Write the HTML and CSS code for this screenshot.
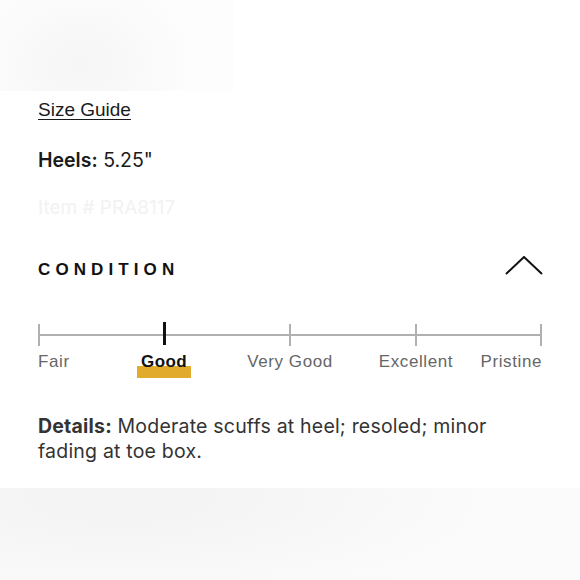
FILE: index.html
```html
<!DOCTYPE html>
<html>
<head>
<meta charset="utf-8">
<link rel="stylesheet" href="styles.css">
</head>
<body>
<div class="top-shade"></div>
<main class="content">
  <a class="size-guide">Size Guide</a>
  <p class="heels"><b>Heels:</b> 5.25"</p>
  <p class="item">Item # PRA8117</p>
  <div class="cond-head">
    <h2 class="cond-title">CONDITION</h2>
    <svg class="chev" width="38" height="20" viewBox="0 0 38 20"><path d="M1 18 L19 1 L37 18" fill="none" stroke="#111" stroke-width="2"/></svg>
  </div>
  <div class="scale">
    <div class="track">
      <span class="tick t0"></span>
      <span class="tick t1 active"></span>
      <span class="tick t2"></span>
      <span class="tick t3"></span>
      <span class="tick t4"></span>
    </div>
    <div class="labels">
      <span class="lbl l0">Fair</span>
      <span class="lbl l1 cur">Good<i class="hl"></i></span>
      <span class="lbl l2">Very Good</span>
      <span class="lbl l3">Excellent</span>
      <span class="lbl l4">Pristine</span>
    </div>
  </div>
  <p class="details"><b>Details:</b> Moderate scuffs at heel; resoled; minor fading at toe box.</p>
</main>
<div class="bottom-shade"></div>
</body>
</html>
```
FILE: styles.css
```css
html, body { margin: 0; padding: 0; background: #fff; }
body { width: 580px; height: 580px; overflow: hidden; font-family: "Liberation Sans", Arial, sans-serif; color: #1a1a1a; }
.top-shade {
  width: 233px; height: 91px;
  background: radial-gradient(ellipse 110px 90px at 80px 65px, #f6f6f6 0%, #f8f8f8 40%, #fbfbfb 80%, #fdfdfd 100%);
}
.content { padding: 0 38px; display: flex; flex-direction: column; }
.size-guide { font-size: 19px; margin-top: 8px; line-height: 22px; text-decoration: underline; text-underline-offset: 3px; text-decoration-thickness: 1px; color: #1a1a1a; align-self: flex-start; }
.heels { font-family: Inter, "Liberation Sans", sans-serif; font-size: 19.5px; margin: 28px 0 0; line-height: 22px; }
.heels b { font-weight: 600; }
.item { font-family: Inter, "Liberation Sans", sans-serif; font-size: 19px; margin: 26px 0 0; line-height: 22px; color: #f2f2f2; }
.cond-head { display: flex; justify-content: space-between; align-items: center; margin-top: 40px; height: 22px; }
.cond-title { margin: 0; font-size: 17px; font-weight: bold; letter-spacing: 5.1px; color: #111; }
.chev { margin-right: -1px; margin-top: -8px; }
.scale { margin-top: 43px; position: relative; }
.track { position: relative; height: 22px; }
.track::before { content: ""; position: absolute; left: 0; right: 0; top: 10px; height: 2px; background: #b0b0b0; }
.tick { position: absolute; top: 0; width: 2px; height: 22px; background: #b0b0b0; margin-left: -1px; }
.tick.active { background: #111; width: 3px; margin-left: -1.5px; top: -2px; height: 23px; }
.t0 { left: 1px; } .t1 { left: 126px; } .t2 { left: 252px; } .t3 { left: 378px; } .t4 { left: 503px; }
.labels { position: relative; height: 30px; margin-top: 6px; }
.lbl { position: absolute; top: 0; font-size: 17px; letter-spacing: 0.6px; color: #666; line-height: 20px; white-space: nowrap; transform: translateX(-50%); }
.l0 { left: 0; transform: none; }
.l1 { left: 126px; }
.l2 { left: 252px; }
.l3 { left: 378px; }
.l4 { right: 0; transform: none; }
.cur { color: #111; font-weight: bold; letter-spacing: 0.4px; }
.hl { position: absolute; left: 50%; top: 14px; width: 54px; height: 12px; margin-left: -27px; background: #e1ab2d; z-index: -1; }
.details { margin: 32px 0 0; font-family: Inter, "Liberation Sans", sans-serif; font-size: 19.5px; line-height: 25px; color: #333; letter-spacing: 0.2px; }
.details b { font-weight: 700; }
.bottom-shade {
  position: absolute; left: 0; top: 488px; width: 580px; height: 92px;
  background: radial-gradient(ellipse 400px 110px at 120px 10px, #f3f3f3 0%, #f6f6f6 40%, #f9f9f9 75%, #fbfbfb 100%);
}
```
